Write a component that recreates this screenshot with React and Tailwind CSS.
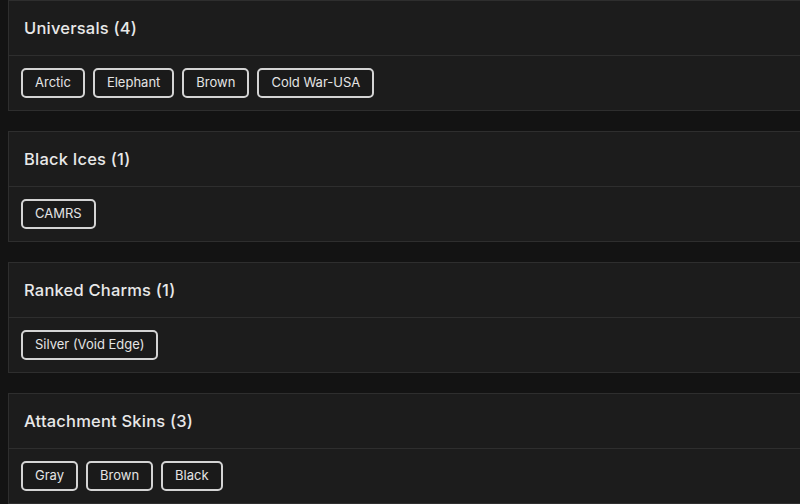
import React from "react";

const sections = [
  { title: "Universals", items: ["Arctic", "Elephant", "Brown", "Cold War-USA"] },
  { title: "Black Ices", items: ["CAMRS"] },
  { title: "Ranked Charms", items: ["Silver (Void Edge)"] },
  { title: "Attachment Skins", items: ["Gray", "Brown", "Black"] },
];

const Section = ({ title, items }) => (
  <div className="bg-[#1c1c1c] border border-r-0 border-[#2e2e2e]">
    {/* Header */}
    <div className="h-[55px] flex items-center px-[15px] border-b border-[#2e2e2e]">
      <h3 className="text-[16.5px] font-medium tracking-[0.2px] text-[#e8e8e8]">
        {title} ({items.length})
      </h3>
    </div>
    {/* Item chips */}
    <div className="h-[54px] flex items-start gap-2 px-3 pt-3">
      {items.map((item) => (
        <span
          key={item}
          className="h-[30px] flex items-center px-[12px] border-2 border-[#d4d4d4] rounded-[5px] bg-[#1a1a1a] text-[13px] text-[#e4e4e4]"
        >
          {item}
        </span>
      ))}
    </div>
  </div>
);

export default function App() {
  return (
    <div
      className="min-h-[504px] bg-[#131313] pl-2 flex flex-col gap-5"
      style={{ fontFamily: "Inter, 'Open Sans', sans-serif" }}
    >
      {sections.map((s) => (
        <Section key={s.title} title={s.title} items={s.items} />
      ))}
    </div>
  );
}
